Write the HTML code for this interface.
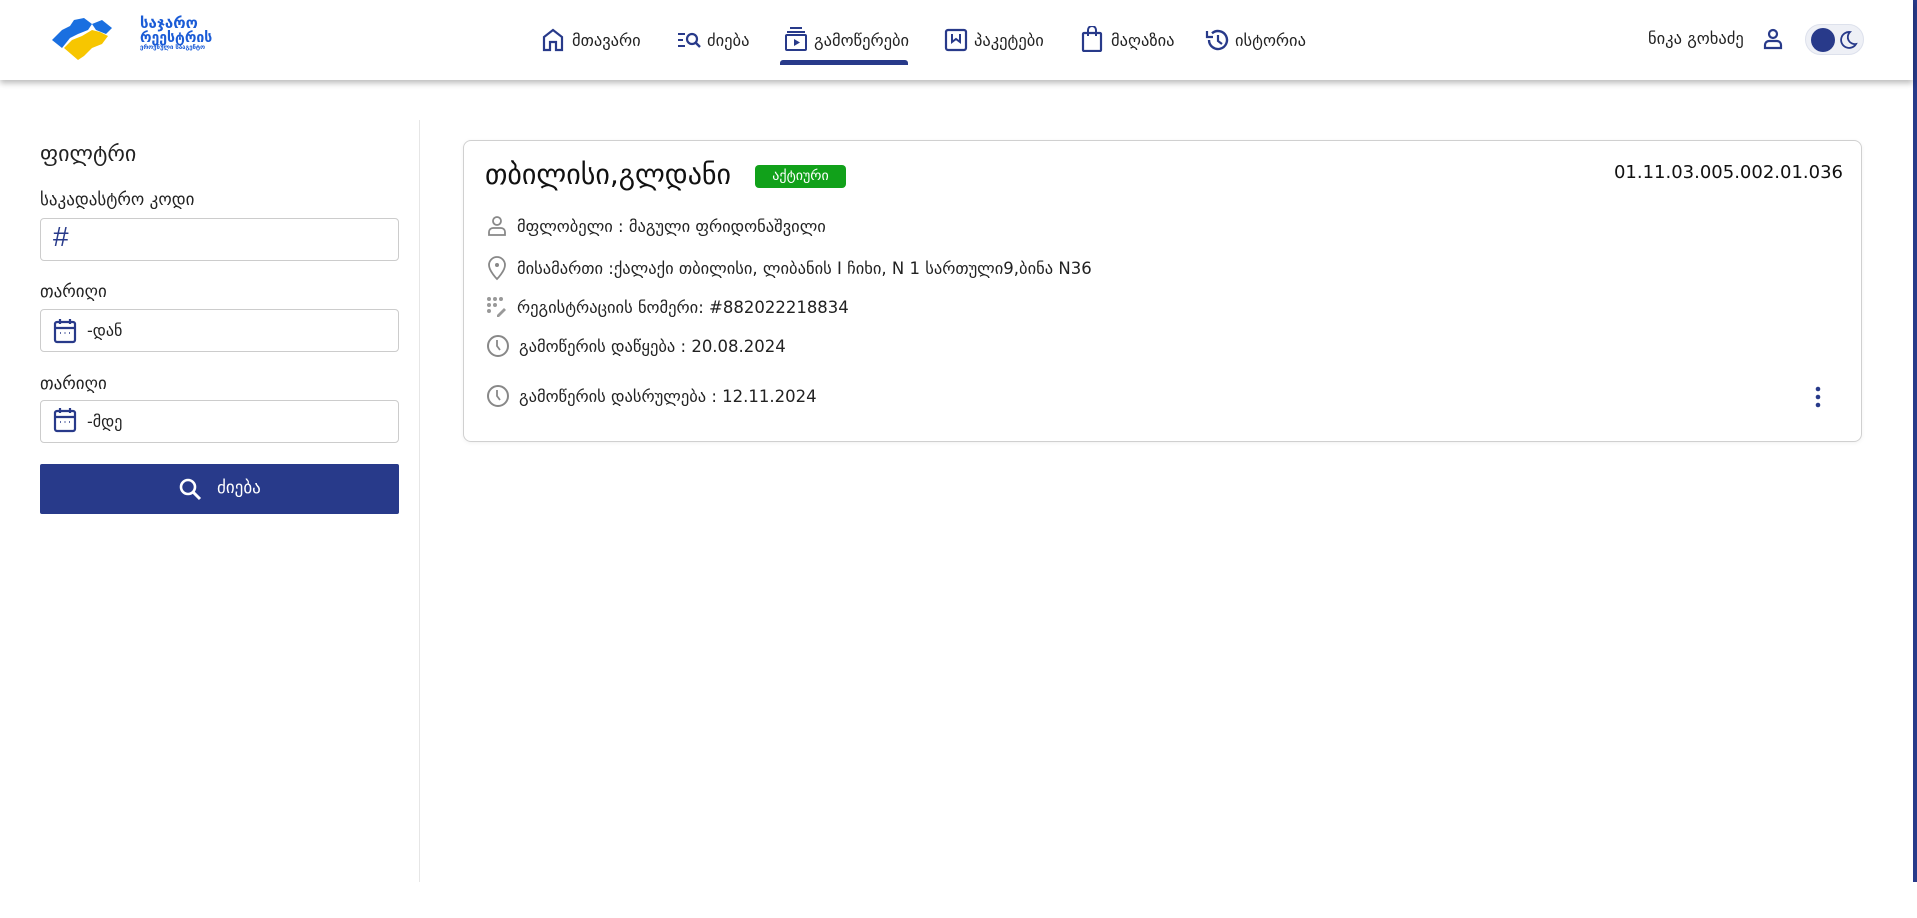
<!DOCTYPE html>
<html><head><meta charset="utf-8"><style>
*{box-sizing:border-box;margin:0;padding:0}
body{width:1917px;height:918px;background:#fff;font-family:"DejaVu Sans","Liberation Sans",sans-serif;color:#222;position:relative;overflow:hidden}
.hdr{position:absolute;left:0;top:0;width:1913px;height:80px;background:#fff;box-shadow:0 3px 6px rgba(0,0,0,.28);z-index:2}
.nav{position:absolute;top:28px;height:24px;display:flex;align-items:center;font-size:16.5px;color:#222;white-space:nowrap}
.nav svg{position:absolute;left:-30px;top:0}
.ul{position:absolute;left:780px;top:60px;width:128px;height:5px;background:#283a8a;border-radius:3px 3px 0 0}
.bar{position:absolute;right:0;top:0;width:4px;height:882px;background:#283a8a}
.sep{position:absolute;left:419px;top:120px;width:1px;height:762px;background:#e6e6e6}
.lbl{position:absolute;left:40px;font-size:17px;color:#222;white-space:nowrap}
.inp{position:absolute;left:40px;width:359px;height:43px;border:1px solid #ccc;border-radius:4px}
.inp span{position:absolute;left:46px;top:11px;font-size:16px}
.btn{position:absolute;left:40px;top:464px;width:359px;height:50px;background:#283a8a;border-radius:2px;color:#fff;font-size:17px}
.card{position:absolute;left:463px;top:140px;width:1399px;height:302px;border:1px solid #d0d0d0;border-radius:8px;box-shadow:0 1px 4px rgba(0,0,0,.06)}
.row{position:absolute;left:22px;font-size:16.5px;color:#222;display:flex;align-items:center;white-space:nowrap}
.row svg{margin-right:9px}
</style></head><body>
<div class="hdr">
 <svg style="position:absolute;left:48px;top:16px" width="80" height="46" viewBox="0 0 80 46">
  <path d="M4 24 L14 14 L22 10 L26 4 L36 2 L44 8 L40 14 L30 18 L22 22 L14 32 Z" fill="#1a6fe0"/>
  <path d="M16 32 L24 24 L34 20 L44 14 L52 16 L60 20 L54 28 L44 32 L36 40 L30 44 Z" fill="#f7c600"/>
  <path d="M44 8 L54 4 L64 12 L58 18 L48 14 Z" fill="#1a6fe0"/>
 </svg>
 <div style="position:absolute;left:140px;top:16px;color:#1a5bd6;font-weight:bold;line-height:1">
  <div style="font-size:15px">საჯარო</div><div style="font-size:14px">რეესტრის</div><div style="font-size:6px">ეროვნული სააგენტო</div></div>
 <div class="nav" style="left:572px"><svg width="22" height="24" viewBox="0 0 22 24"><path d="M2 22V9L11 2L20 9V22H14V14H8V22Z" fill="none" stroke="#283a8a" stroke-width="2.2"/></svg>მთავარი</div>
 <div class="nav" style="left:707px"><svg width="24" height="24" viewBox="0 0 24 24"><path d="M1 6h7M1 12h5M1 18h7" stroke="#283a8a" stroke-width="2"/><circle cx="15" cy="11" r="5" fill="none" stroke="#283a8a" stroke-width="2.2"/><path d="M18.5 14.5L23 19" stroke="#283a8a" stroke-width="2.4"/></svg>ძიება</div>
 <div class="nav" style="left:814px"><svg width="24" height="26" viewBox="0 0 24 26" style="top:-2px"><path d="M6 2h12M3 6h18" stroke="#283a8a" stroke-width="2"/><rect x="2" y="9" width="20" height="15" rx="1" fill="none" stroke="#283a8a" stroke-width="2"/><path d="M10 13v7l6-3.5z" fill="#283a8a"/></svg>გამოწერები</div>
 <div class="nav" style="left:974px"><svg width="24" height="24" viewBox="0 0 24 24"><rect x="2" y="2" width="20" height="20" rx="2" fill="none" stroke="#283a8a" stroke-width="2.2"/><path d="M8 6v8l4-3 4 3V6" fill="none" stroke="#283a8a" stroke-width="2"/></svg>პაკეტები</div>
 <div class="nav" style="left:1111px"><svg width="22" height="26" viewBox="0 0 22 26" style="top:-2px"><rect x="2" y="7" width="18" height="18" rx="1" fill="none" stroke="#283a8a" stroke-width="2.2"/><path d="M7 10V4a4 4 0 0 1 8 0v6" fill="none" stroke="#283a8a" stroke-width="2"/></svg>მაღაზია</div>
 <div class="nav" style="left:1235px"><svg width="24" height="24" viewBox="0 0 24 24"><path d="M4 12a9 9 0 1 0 3-6.7" fill="none" stroke="#283a8a" stroke-width="2.4"/><path d="M2 3v6h6" fill="none" stroke="#283a8a" stroke-width="2.2"/><path d="M13 7v6l4 3" fill="none" stroke="#283a8a" stroke-width="2.2"/></svg>ისტორია</div>
 <div class="ul"></div>
 <div style="position:absolute;left:1648px;top:29px;font-size:16.5px;white-space:nowrap">ნიკა გოხაძე</div>
 <svg style="position:absolute;left:1762px;top:28px" width="22" height="22" viewBox="0 0 22 22"><circle cx="11" cy="6" r="4" fill="none" stroke="#283a8a" stroke-width="2.2"/><path d="M3 20v-3a4 4 0 0 1 4-4h8a4 4 0 0 1 4 4v3z" fill="none" stroke="#283a8a" stroke-width="2.2"/></svg>
 <div style="position:absolute;left:1805px;top:24px;width:59px;height:31px;border-radius:16px;background:#eef0f6;border:1px solid #dde1ec"></div>
 <div style="position:absolute;left:1811px;top:28px;width:24px;height:24px;border-radius:50%;background:#283a8a"></div>
 <svg style="position:absolute;left:1838px;top:30px" width="20" height="20" viewBox="0 0 20 20"><path d="M12 2a8 8 0 1 0 6 12A7 7 0 0 1 12 2z" fill="none" stroke="#283a8a" stroke-width="1.8"/></svg>
</div>
<div class="bar"></div>
<div class="sep"></div>
<div style="position:absolute;left:40px;top:142px;font-size:22px">ფილტრი</div>
<div class="lbl" style="top:190px">საკადასტრო კოდი</div>
<div class="inp" style="top:218px"><span style="left:12px;top:2px;font-size:28px;color:#283a8a;font-family:'Liberation Sans'">#</span></div>
<div class="lbl" style="top:282px">თარიღი</div>
<div class="inp" style="top:309px"><svg style="position:absolute;left:12px;top:8px" width="24" height="26" viewBox="0 0 24 26"><rect x="2" y="4" width="20" height="20" rx="2" fill="none" stroke="#283a8a" stroke-width="2.2"/><path d="M2 10h20M7 1v5M17 1v5" stroke="#283a8a" stroke-width="2.2"/><path d="M7 15h1M11.5 15h1M16 15h1" stroke="#283a8a" stroke-width="1.5"/></svg><span>-დან</span></div>
<div class="lbl" style="top:374px">თარიღი</div>
<div class="inp" style="top:400px"><svg style="position:absolute;left:12px;top:6px" width="24" height="26" viewBox="0 0 24 26"><rect x="2" y="4" width="20" height="20" rx="2" fill="none" stroke="#283a8a" stroke-width="2.2"/><path d="M2 10h20M7 1v5M17 1v5" stroke="#283a8a" stroke-width="2.2"/><path d="M7 15h1M11.5 15h1M16 15h1" stroke="#283a8a" stroke-width="1.5"/></svg><span>-მდე</span></div>
<div class="btn"><svg style="position:absolute;left:138px;top:13px" width="24" height="24" viewBox="0 0 24 24"><circle cx="10" cy="10" r="7" fill="none" stroke="#fff" stroke-width="2.6"/><path d="M15 15l7 7" stroke="#fff" stroke-width="3"/></svg><span style="position:absolute;left:177px;top:14px">ძიება</span></div>
<div class="card">
 <div style="position:absolute;left:21px;top:17px;font-size:28px;color:#111;white-space:nowrap">თბილისი,გლდანი</div>
 <div style="position:absolute;left:291px;top:24px;width:91px;height:23px;background:#11a11a;border-radius:4px;color:#fff;font-size:14px;text-align:center;line-height:23px">აქტიური</div>
 <div style="position:absolute;right:18px;top:21px;font-size:18px;color:#111;font-family:'DejaVu Sans'">01.11.03.005.002.01.036</div>
 <div class="row" style="top:74px"><svg width="22" height="22" viewBox="0 0 22 22"><circle cx="11" cy="6" r="4" fill="none" stroke="#888" stroke-width="1.8"/><path d="M3 20v-3a4 4 0 0 1 4-4h8a4 4 0 0 1 4 4v3z" fill="none" stroke="#888" stroke-width="1.8"/></svg>მფლობელი : მაგული ფრიდონაშვილი</div>
 <div class="row" style="top:114px"><svg width="22" height="26" viewBox="0 0 22 26"><path d="M11 24s-8-8-8-14a8 8 0 0 1 16 0c0 6-8 14-8 14z" fill="none" stroke="#888" stroke-width="1.8"/><circle cx="11" cy="10" r="2" fill="#888"/></svg>მისამართი :ქალაქი თბილისი, ლიბანის I ჩიხი, N 1 სართული9,ბინა N36</div>
 <div class="row" style="top:155px"><svg width="22" height="22" viewBox="0 0 22 22" fill="#999"><circle cx="3" cy="3" r="2"/><circle cx="9" cy="3" r="2"/><circle cx="15" cy="3" r="2"/><circle cx="3" cy="9" r="2"/><circle cx="9" cy="9" r="2"/><circle cx="3" cy="15" r="2"/><path d="M11 19l7-7 2 2-7 7h-2z"/></svg>რეგისტრაციის ნომერი: #882022218834</div>
 <div class="row" style="top:193px"><svg width="24" height="24" viewBox="0 0 24 24"><circle cx="12" cy="12" r="10" fill="none" stroke="#888" stroke-width="2"/><path d="M11 6v6l3 4" fill="none" stroke="#888" stroke-width="1.8"/></svg>გამოწერის დაწყება : 20.08.2024</div>
 <div class="row" style="top:243px"><svg width="24" height="24" viewBox="0 0 24 24"><circle cx="12" cy="12" r="10" fill="none" stroke="#888" stroke-width="2"/><path d="M11 6v6l3 4" fill="none" stroke="#888" stroke-width="1.8"/></svg>გამოწერის დასრულება : 12.11.2024</div>
 <svg style="position:absolute;left:1350px;top:245px" width="8" height="22" viewBox="0 0 8 22" fill="#283a8a"><circle cx="4" cy="3" r="2.3"/><circle cx="4" cy="11" r="2.3"/><circle cx="4" cy="19" r="2.3"/></svg>
</div>
</body></html>
